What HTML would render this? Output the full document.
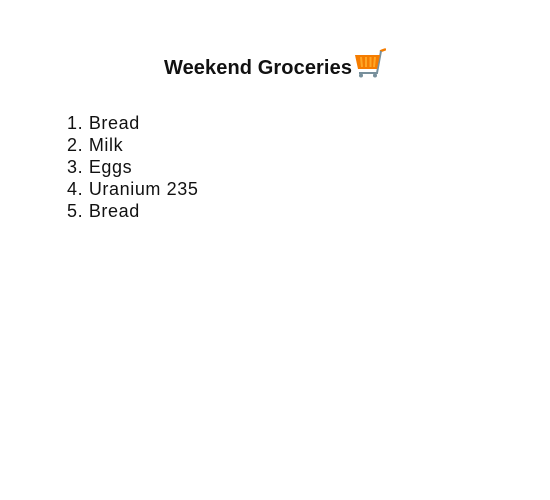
<!DOCTYPE html>
<html><head><style>
body{margin:0;width:550px;height:500px;background:#fff;font-family:"Liberation Sans",sans-serif;color:#111;}
h1{position:absolute;left:0;width:550px;top:48px;margin:0;text-align:center;font-size:20px;font-weight:bold;line-height:26px;}
h1 span{display:inline-block;letter-spacing:0.1px}
svg{vertical-align:-5px;margin-left:2px}
ol{position:absolute;left:67px;top:112px;margin:0;padding:0;list-style:none;font-size:18px;line-height:22px;letter-spacing:0.6px;}
</style></head><body>
<h1><span>Weekend Groceries</span><svg width="32" height="31" viewBox="0 0 32 31">
<path d="M27 3 L31 1.5" stroke="#f57c00" stroke-width="2.5" stroke-linecap="round"/>
<path d="M27 3 L23 25 H5" stroke="#78909c" stroke-width="2" fill="none"/>
<path d="M1 7 H26 L23 21 H4 Z" fill="#f57c00"/>
<path d="M7 9 L8 19 M12 9 V19 M16.5 9 V19 M21 9 L20 19" stroke="#ffa726" stroke-width="2"/>
<circle cx="7" cy="27.5" r="2" fill="#78909c"/><circle cx="21" cy="27.5" r="2" fill="#78909c"/>
</svg></h1>
<ol><li>1. Bread</li><li>2. Milk</li><li>3. Eggs</li><li>4. Uranium 235</li><li>5. Bread</li></ol>
</body></html>
